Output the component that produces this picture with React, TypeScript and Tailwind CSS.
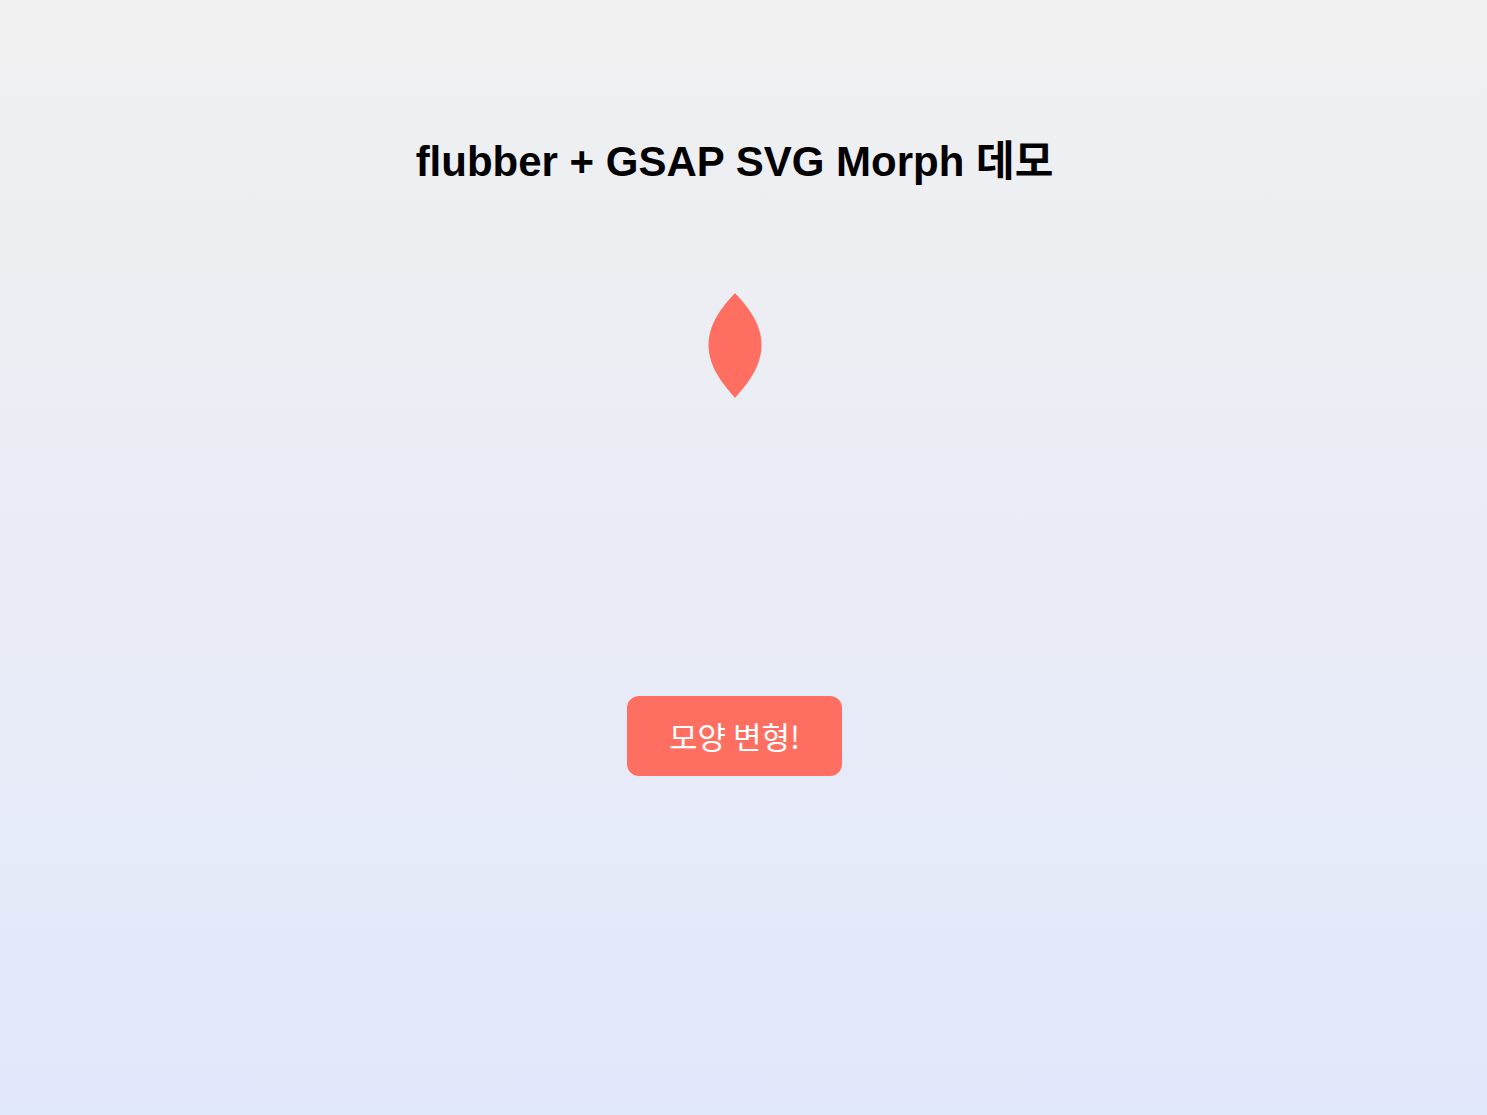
import React from 'react';

export default function App() {
  return (
    <div className="min-h-screen bg-gradient-to-b from-[#f0f0f0] to-[#e2e8fb] pr-[18px] font-['Liberation_Sans','Noto_Sans_CJK_KR',sans-serif]">
      <div className="flex flex-col items-center pt-[138px]">
        {/* Title */}
        <h1 className="text-[42px] leading-[48px] font-bold text-black">
          flubber + GSAP SVG Morph 데모
        </h1>

        {/* Morphing shape */}
        <svg width="200" height="200" viewBox="0 0 200 200" className="mt-[59px]">
          <path
            d="M100 48 C112 61 126.5 78 126.5 100 C126.5 122 112 139 100 153 C88 139 73.5 122 73.5 100 C73.5 78 88 61 100 48 Z"
            fill="#ff6f61"
          />
        </svg>

        {/* Button */}
        <button className="mt-[251px] w-[215px] h-[80px] rounded-xl bg-[#ff6f61] text-white text-[31px] font-['Noto_Sans_CJK_KR',sans-serif]">
          모양 변형!
        </button>
      </div>
    </div>
  );
}
